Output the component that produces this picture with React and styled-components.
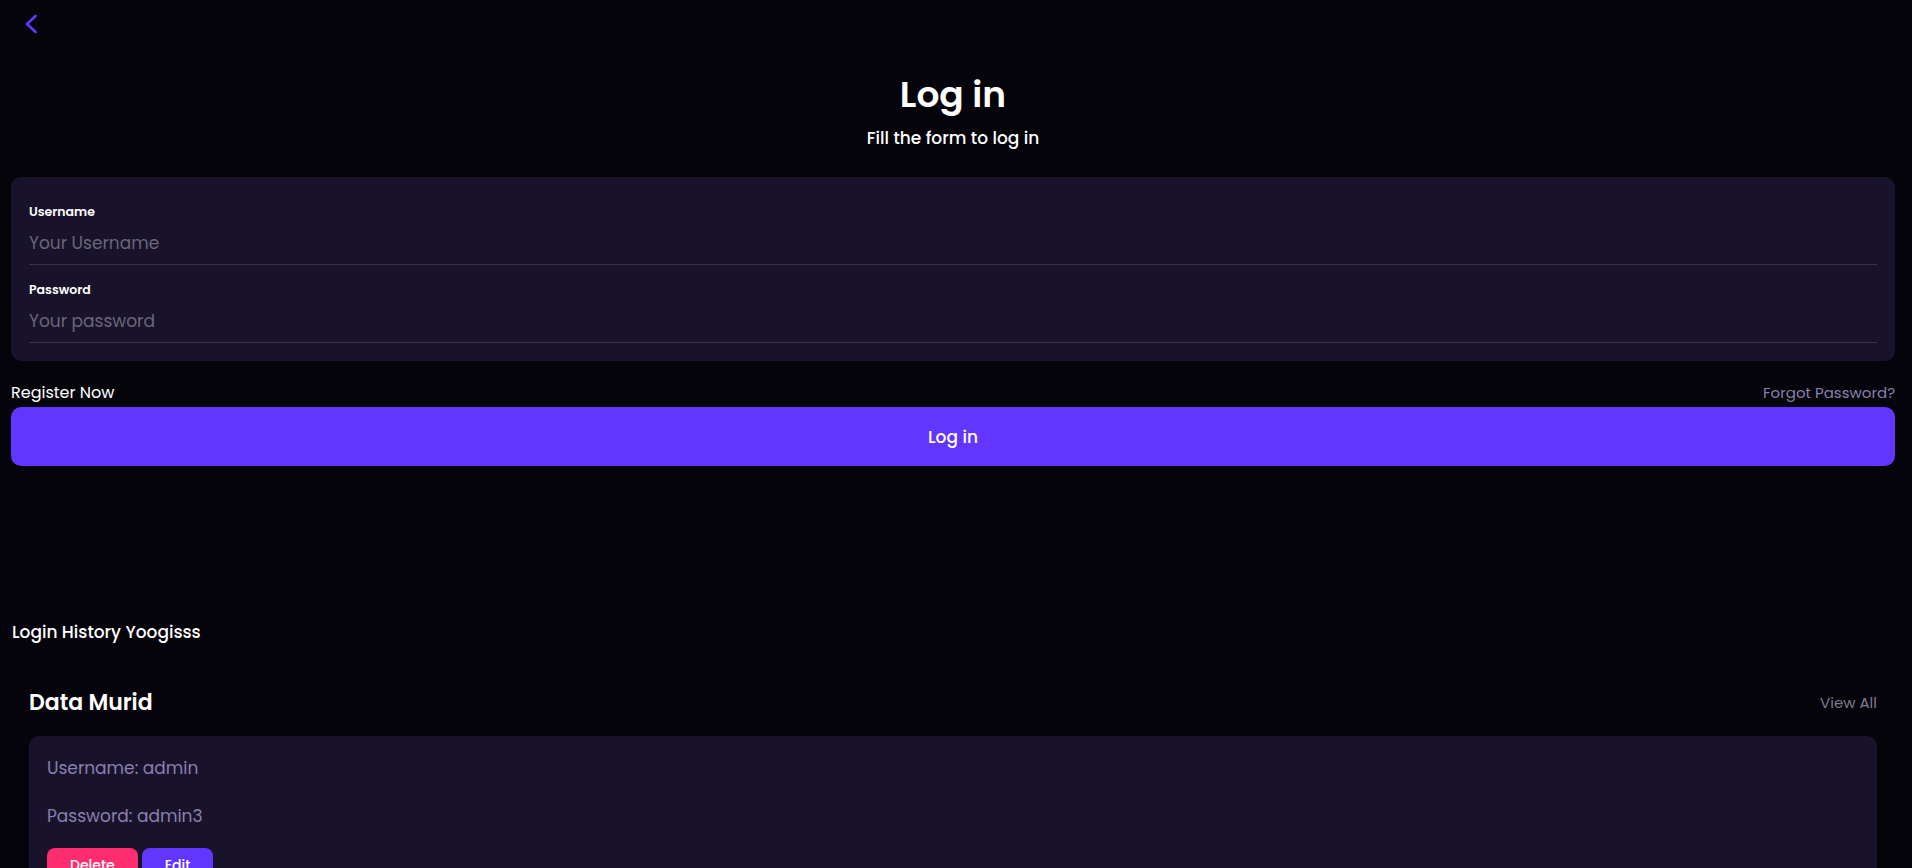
import React from "react";
import styled, { createGlobalStyle } from "styled-components";

const Global = createGlobalStyle`
  html, body { margin: 0; padding: 0; background: #05040b; }
  body { font-family: "Poppins", "Inter", "Noto Sans", sans-serif; color: #ffffff; }
  * { box-sizing: border-box; }
`;

const Page = styled.div`
  min-height: 868px;
  background: #05040b;
  padding: 0 17px 0 11px;
`;

const TopBar = styled.div`
  height: 48px;
  padding: 14px 0 0 14px;
`;

const BackButton = styled.button`
  background: none;
  border: 0;
  padding: 0;
  width: 12px;
  height: 20px;
  display: block;
  cursor: pointer;
  svg { display: block; }
`;

const Heading = styled.div`
  display: flex;
  flex-direction: column;
  align-items: center;
  padding-top: 25px;
`;

const Title = styled.h1`
  margin: 0;
  font-size: 36px;
  font-weight: 600;
  line-height: 44px;
  color: #ffffff;
`;

const Subtitle = styled.p`
  margin: 9px 0 0;
  font-size: 17px;
  font-weight: 500;
  line-height: 24px;
  color: #ffffff;
`;

const FormCard = styled.div`
  margin-top: 27px;
  background: #18132a;
  border-radius: 10px;
  padding: 25px 18px 18px;
  display: flex;
  flex-direction: column;
  gap: 15px;
`;

const Field = styled.label`
  display: flex;
  flex-direction: column;
  border-bottom: 1px solid #3a2f4d;
`;

const FieldLabel = styled.span`
  font-size: 12.5px;
  font-weight: 600;
  line-height: 20px;
  color: #ffffff;
`;

const Input = styled.input`
  background: transparent;
  border: 0;
  outline: none;
  padding: 9px 0;
  height: 42px;
  font-family: inherit;
  font-size: 17px;
  line-height: 24px;
  color: #ffffff;
  &::placeholder { color: #6a6679; }
`;

const LinkRow = styled.div`
  margin-top: 20px;
  display: flex;
  justify-content: space-between;
  align-items: baseline;
  line-height: 24px;
`;

const LinkText = styled.a`
  font-size: ${(p) => (p.$muted ? 15 : 16)}px;
  font-weight: 400;
  color: ${(p) => (p.$muted ? "#8a80ad" : "#ffffff")};
  text-decoration: none;
  cursor: pointer;
`;

const PrimaryButton = styled.button`
  display: block;
  width: 100%;
  height: 59px;
  margin-top: 2px;
  border: 0;
  border-radius: 10px;
  background: #6236ff;
  color: #ffffff;
  font-family: inherit;
  font-size: 17px;
  font-weight: 500;
  cursor: pointer;
`;

const HistoryTitle = styled.h3`
  margin: 154px 0 0 1px;
  font-size: 17px;
  font-weight: 500;
  line-height: 24px;
  color: #ffffff;
`;

const Section = styled.section`
  padding: 0 18px;
  margin-top: 44px;
`;

const SectionHeader = styled.div`
  display: flex;
  justify-content: space-between;
  align-items: center;
  height: 30px;
`;

const SectionTitle = styled.h2`
  margin: 0;
  font-size: 22px;
  font-weight: 600;
  line-height: 30px;
  color: #ffffff;
`;

const ViewAll = styled.a`
  font-size: 15px;
  font-weight: 400;
  line-height: 30px;
  color: #7e7a8e;
  cursor: pointer;
`;

const DataCard = styled.div`
  margin-top: 18px;
  background: #18132a;
  border-radius: 10px;
  padding: 20px 18px 20px;
  display: flex;
  flex-direction: column;
  gap: 24px;
`;

const DataLine = styled.p`
  margin: 0;
  font-size: 17px;
  line-height: 24px;
  color: #8a80ad;
`;

const Actions = styled.div`
  display: flex;
  gap: 4px;
  margin-top: -4px;
`;

const SmallButton = styled.button`
  height: 35px;
  padding: 0 23px;
  border: 0;
  border-radius: 8px;
  background: ${(p) => (p.$danger ? "#ff2d6f" : "#6236ff")};
  color: #ffffff;
  font-family: inherit;
  font-size: 14px;
  font-weight: 500;
  cursor: pointer;
`;

export default function App() {
  return (
    <>
      <Global />
      <Page>
        <TopBar>
          <BackButton aria-label="Back">
            <svg width="12" height="20" viewBox="0 0 12 20" fill="none">
              <path d="M10.5 2 L2 10 L10.5 18" stroke="#6236ff" strokeWidth="2.6" strokeLinecap="round" strokeLinejoin="round" />
            </svg>
          </BackButton>
        </TopBar>
        <Heading>
          <Title>Log in</Title>
          <Subtitle>Fill the form to log in</Subtitle>
        </Heading>
        <FormCard>
          <Field>
            <FieldLabel>Username</FieldLabel>
            <Input placeholder="Your Username" />
          </Field>
          <Field>
            <FieldLabel>Password</FieldLabel>
            <Input type="password" placeholder="Your password" />
          </Field>
        </FormCard>
        <LinkRow>
          <LinkText>Register Now</LinkText>
          <LinkText $muted>Forgot Password?</LinkText>
        </LinkRow>
        <PrimaryButton>Log in</PrimaryButton>
        <HistoryTitle>Login History Yoogisss</HistoryTitle>
        <Section>
          <SectionHeader>
            <SectionTitle>Data Murid</SectionTitle>
            <ViewAll>View All</ViewAll>
          </SectionHeader>
          <DataCard>
            <DataLine>Username: admin</DataLine>
            <DataLine>Password: admin3</DataLine>
            <Actions>
              <SmallButton $danger>Delete</SmallButton>
              <SmallButton>Edit</SmallButton>
            </Actions>
          </DataCard>
        </Section>
      </Page>
    </>
  );
}
